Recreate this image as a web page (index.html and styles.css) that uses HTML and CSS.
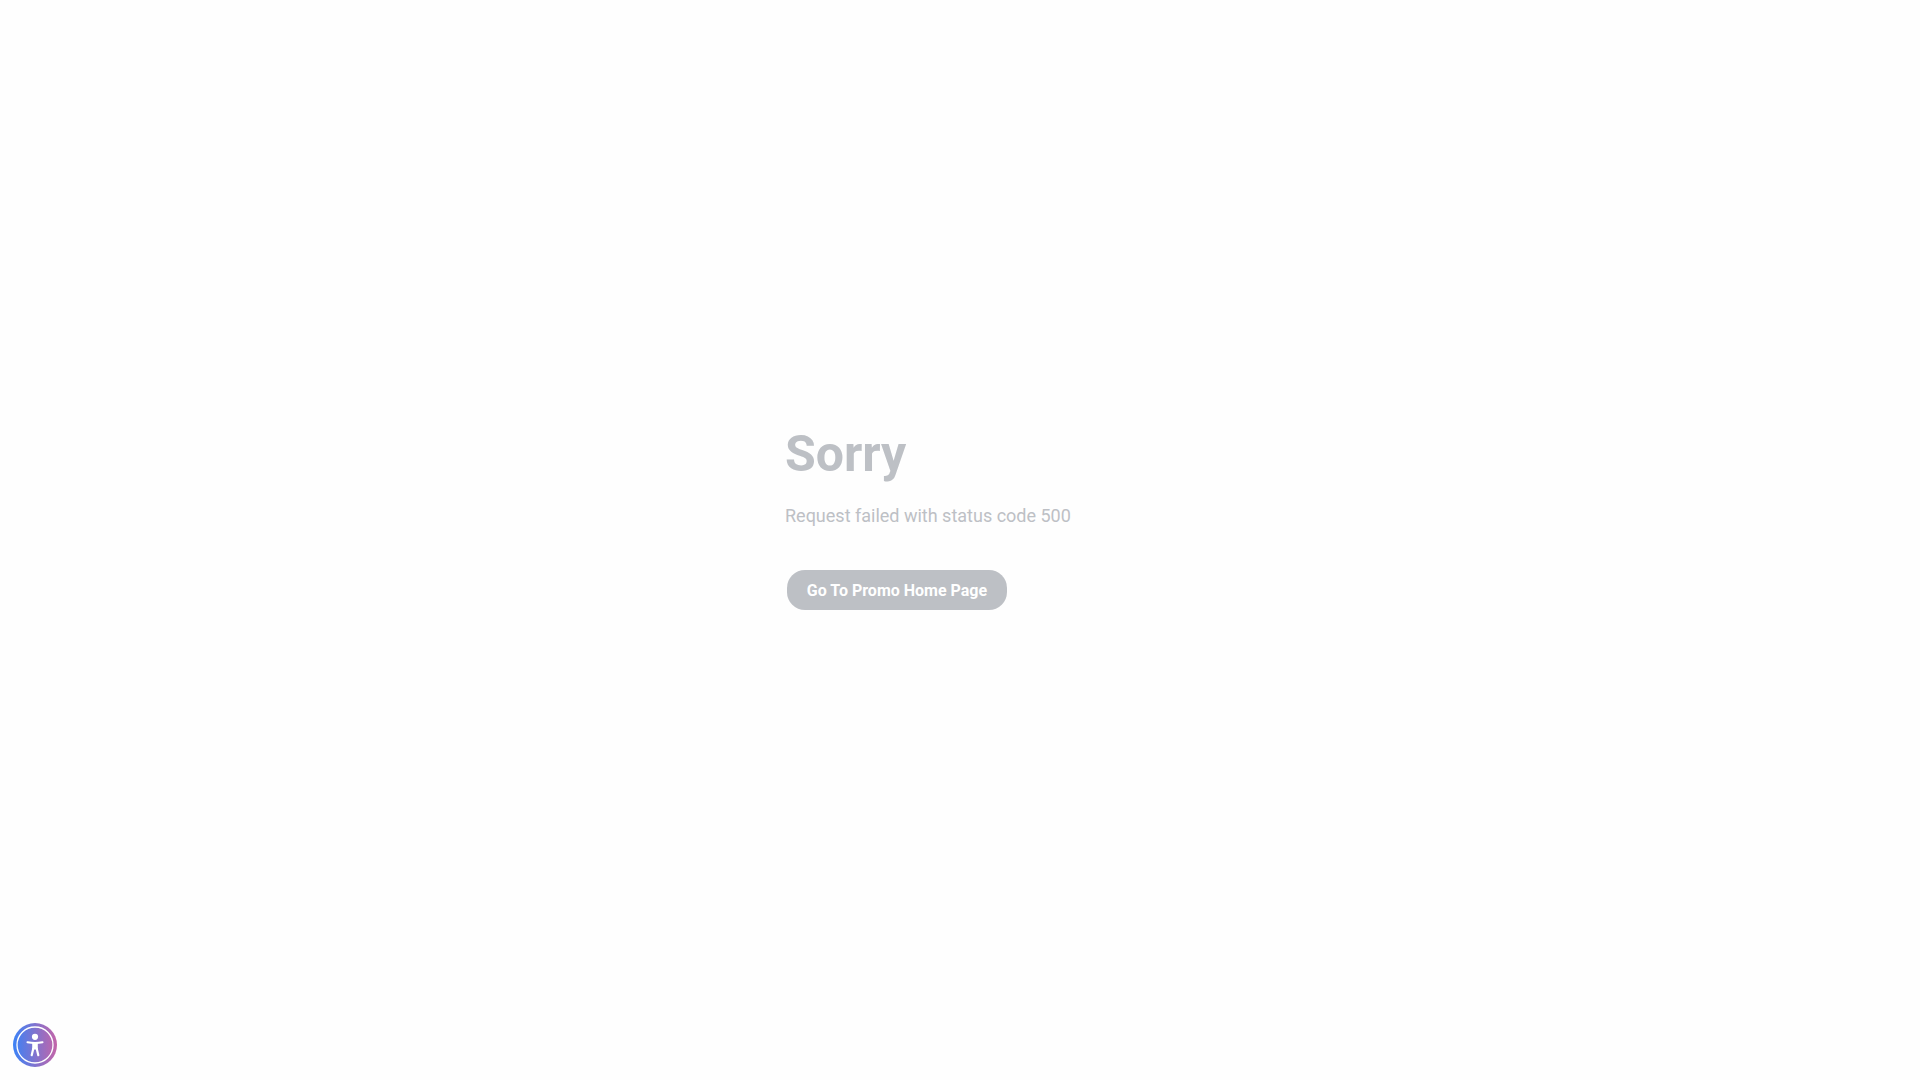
FILE: index.html
```html
<!DOCTYPE html>
<html lang="en">
<head>
  <meta charset="utf-8">
  <meta name="viewport" content="width=device-width, initial-scale=1">
  <title>Sorry</title>
  <link rel="stylesheet" href="styles.css">
</head>
<body>
  <main class="error-page">
    <section class="error-content">
      <h1 class="error-title">Sorry</h1>
      <p class="error-message">Request failed with status code 500</p>
      <button class="home-button" type="button">Go To Promo Home Page</button>
    </section>
  </main>
  <button class="accessibility-button" type="button" aria-label="Accessibility Menu">
    <svg class="accessibility-icon" viewBox="0 0 44 44" aria-hidden="true">
      <defs>
        <linearGradient id="badge-fill" x1="0" y1="0" x2="1" y2="0">
          <stop offset="0" stop-color="#3b82f6"/>
          <stop offset="1" stop-color="#c464a8"/>
        </linearGradient>
      </defs>
      <circle cx="22" cy="22" r="22" fill="url(#badge-fill)"/>
      <circle cx="22" cy="22" r="18" fill="none" stroke="#fff" stroke-width="1.3"/>
      <circle cx="22" cy="13.8" r="3.1" fill="#fff"/>
      <path d="M14.5 19.3 C19 20.1 25 20.1 29.5 19.3" fill="none" stroke="#fff" stroke-width="2.1" stroke-linecap="round"/>
      <path d="M19.2 19.5 H24.8 V26.5 H19.2 Z" fill="#fff"/>
      <path d="M20.3 25.5 L18.7 32.2 M23.7 25.5 L25.3 32.2" fill="none" stroke="#fff" stroke-width="2.2" stroke-linecap="round"/>
    </svg>
  </button>
</body>
</html>
```
FILE: styles.css
```css
* {
  box-sizing: border-box;
}

body {
  margin: 0;
  background: #fefefe;
  color: #bdc0c5;
  font-family: Roboto, sans-serif;
}

.error-page {
  display: flex;
  align-items: center;
  justify-content: center;
  min-height: 100vh;
  padding: 0 16px 44px;
}

.error-content {
  width: 100%;
  max-width: 350px;
}

.error-title {
  margin: 0 0 20px;
  font-size: 50px;
  font-weight: 700;
  line-height: 60px;
}

.error-message {
  margin: 0 0 42px;
  font-size: 18px;
  line-height: 24px;
}

.home-button {
  display: block;
  margin: 2px;
  min-width: 220px;
  height: 40px;
  padding: 1px 19px 0;
  border: 0;
  border-radius: 18px;
  background: #bdc0c5;
  color: #fff;
  font: 700 16px/40px Roboto, sans-serif;
  cursor: pointer;
}

.accessibility-button {
  position: fixed;
  bottom: 13px;
  left: 13px;
  width: 44px;
  height: 44px;
  padding: 0;
  border: 0;
  border-radius: 50%;
  background: none;
  cursor: pointer;
}

.accessibility-icon {
  display: block;
  width: 100%;
  height: 100%;
}
```
